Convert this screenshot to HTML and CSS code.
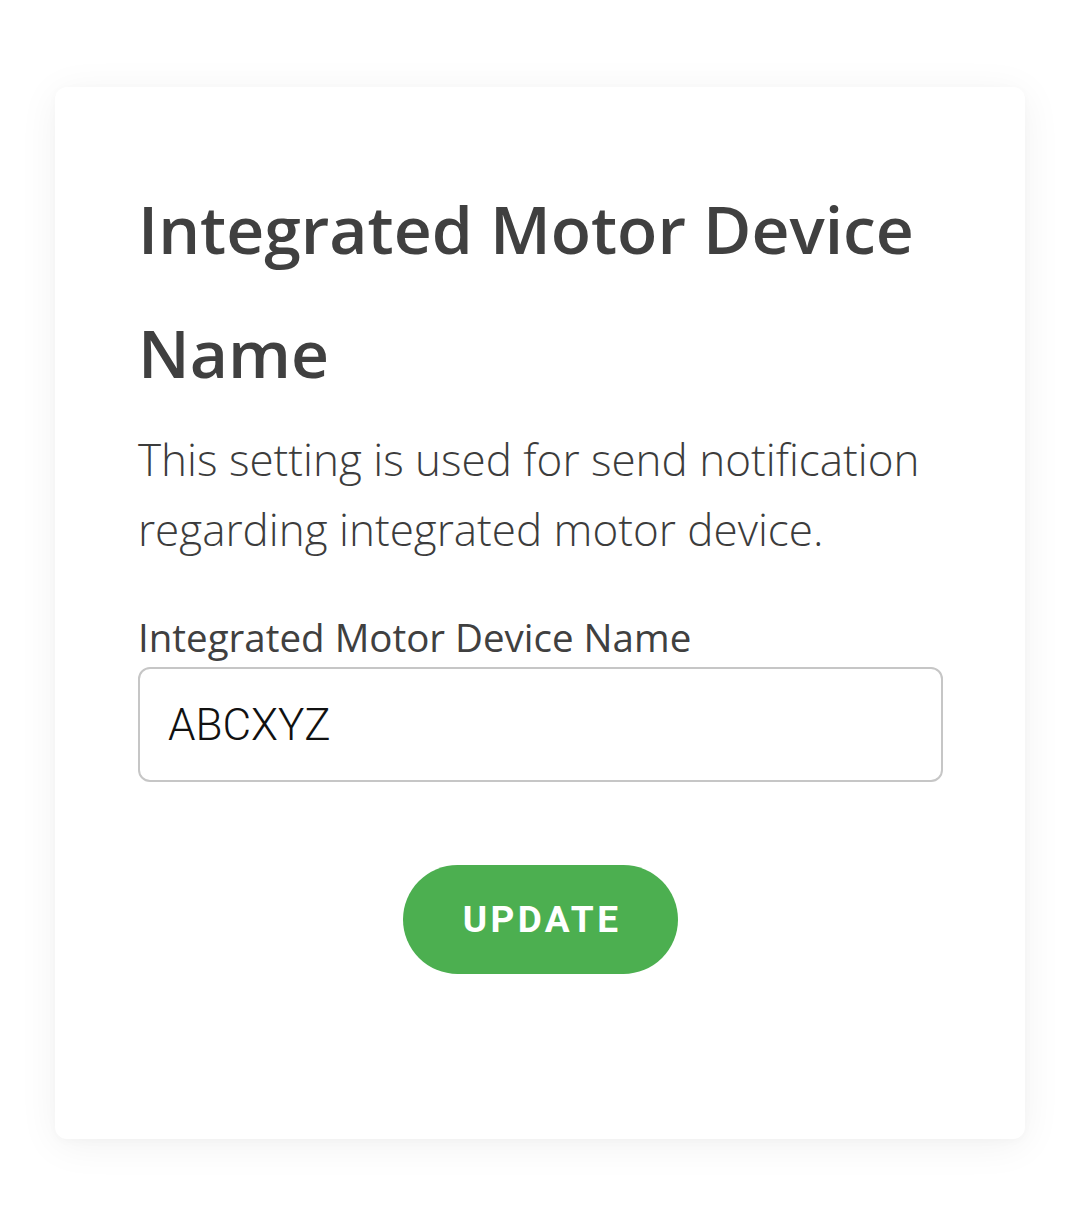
FILE: index.html
```html
<!DOCTYPE html>
<html>
<head>
<meta charset="utf-8">
<link rel="stylesheet" href="styles.css">
</head>
<body>
<main class="page">
  <section class="card">
    <h1 class="title">Integrated Motor Device Name</h1>
    <p class="desc">This setting is used for send notification regarding integrated motor device.</p>
    <label class="label" for="name">Integrated Motor Device Name</label>
    <div class="field"><input id="name" class="input" type="text" value="ABCXYZ"></div>
    <div class="actions"><button class="btn" type="button">UPDATE</button></div>
  </section>
</main>
</body>
</html>
```
FILE: styles.css
```css
html, body {
  margin: 0;
  padding: 0;
  background: #ffffff;
}
.page {
  padding: 87px 55px 0 55px;
  height: 1224px;
  box-sizing: border-box;
}
.card {
  background: #fff;
  border-radius: 12px;
  box-shadow: 0 6px 40px rgba(0,0,0,0.06), 0 2px 10px rgba(0,0,0,0.025);
  padding: 79px 82px 0 83px;
  height: 1052px;
  box-sizing: border-box;
  display: flex;
  flex-direction: column;
}
.title {
  margin: 0;
  font-family: "Open Sans", sans-serif;
  font-weight: 600;
  font-size: 66px;
  line-height: 124px;
  color: #404040;
}
.desc {
  margin: 10px 0 0 0;
  font-family: "Open Sans", sans-serif;
  font-weight: 300;
  font-size: 44px;
  line-height: 70px;
  color: #3c3c3c;
}
.label {
  margin-top: 49px;
  font-family: "Open Sans", sans-serif;
  font-weight: 400;
  font-size: 38.5px;
  line-height: 48px;
  color: #404040;
}
.field {
  margin-top: 6px;
}
.input {
  display: block;
  width: 100%;
  height: 115px;
  box-sizing: border-box;
  border: 2px solid #c6c6c6;
  border-radius: 12px;
  padding: 0 28px;
  font-family: Roboto, sans-serif;
  font-weight: 300;
  font-size: 44px;
  color: #111;
  background: #fff;
  outline: none;
}
.actions {
  margin-top: 83px;
  display: flex;
  justify-content: center;
}
.btn {
  width: 275px;
  height: 109px;
  border: none;
  border-radius: 55px;
  background: #4caf50;
  color: #fff;
  font-family: Roboto, sans-serif;
  font-weight: 700;
  font-size: 37px;
  letter-spacing: 3.4px;
  padding: 0 0 0 3px;
  cursor: pointer;
}
```
